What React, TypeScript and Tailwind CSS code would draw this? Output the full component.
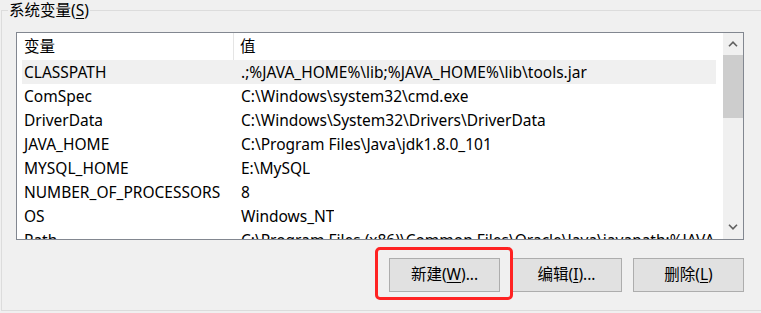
import React from 'react';

const ROWS: [string, string][] = [
  ['CLASSPATH', '.;%JAVA_HOME%\\lib;%JAVA_HOME%\\lib\\tools.jar'],
  ['ComSpec', 'C:\\Windows\\system32\\cmd.exe'],
  ['DriverData', 'C:\\Windows\\System32\\Drivers\\DriverData'],
  ['JAVA_HOME', 'C:\\Program Files\\Java\\jdk1.8.0_101'],
  ['MYSQL_HOME', 'E:\\MySQL'],
  ['NUMBER_OF_PROCESSORS', '8'],
  ['OS', 'Windows_NT'],
  ['Path', 'C:\\Program Files (x86)\\Common Files\\Oracle\\Java\\javapath;%JAVA_HOME%\\bin'],
];

const font = { fontFamily: '"Noto Sans", "Noto Sans CJK SC", sans-serif' };

function Chevron({ up }: { up?: boolean }) {
  return (
    <svg width="10" height="6" viewBox="0 0 10 6" className="block">
      <path
        d={up ? 'M1 5.2 L5 1.2 L9 5.2' : 'M1 0.8 L5 4.8 L9 0.8'}
        fill="none"
        stroke="#606060"
        strokeWidth="1.6"
      />
    </svg>
  );
}

function Btn({ label, mnemonic, rest }: { label: string; mnemonic: string; rest: string }) {
  return (
    <button className="w-[111px] h-[34px] bg-[#e1e1e1] border border-[#adadad] text-[15.5px] text-black flex items-center justify-center">
      {label}(<span className="underline underline-offset-2">{mnemonic}</span>){rest}
    </button>
  );
}

export default function App() {
  return (
    <div className="w-[761px] h-[313px] bg-[#f0f0f0] overflow-hidden" style={font}>
      <div className="pt-[10px] pl-[1px]">
        <div className="relative w-[800px] h-[301px] border border-r-0 border-[#dcdcdc] pl-[14px] pt-[21px]">
          <div className="absolute left-[6px] top-[-11px] px-[1px] bg-[#f0f0f0] text-[15.5px] leading-[20px] text-black">
            系统变量(<span className="underline underline-offset-2">S</span>)
          </div>

          {/* list view */}
          <div className="w-[728px] h-[208px] border border-[#828790] bg-white flex overflow-hidden">
            <div className="flex-1 flex flex-col overflow-hidden">
              <div className="h-[27px] shrink-0 flex items-center text-[15.5px] text-black">
                <div className="w-[217px] pl-[7px] h-full flex items-center border-r border-[#e5e5e5]">变量</div>
                <div className="pl-[6px]">值</div>
              </div>
              {ROWS.map(([k, v], i) => (
                <div
                  key={k}
                  className={`ml-[5px] mr-[7px] h-[24px] shrink-0 flex items-center pt-[1px] text-[15.5px] text-black whitespace-nowrap ${i === 0 ? 'bg-[#f0f0f0]' : ''}`}
                >
                  <div className="w-[217px] pl-[2px] shrink-0">{k}</div>
                  <div className="pl-[2px] overflow-hidden">{v}</div>
                </div>
              ))}
            </div>
            {/* scrollbar */}
            <div className="w-[20px] bg-[#f0f0f0] flex flex-col items-center">
              <div className="h-[22px] shrink-0 flex items-center justify-center">
                <Chevron up />
              </div>
              <div className="w-full h-[63px] shrink-0 bg-[#cdcdcd]" />
              <div className="flex-1" />
              <div className="h-[24px] shrink-0 flex items-center justify-center">
                <Chevron />
              </div>
            </div>
          </div>

          {/* buttons */}
          <div className="w-[728px] mt-[18px] flex justify-end gap-[11px]">
            <div className="relative">
              <Btn label="新建" mnemonic="W" rest="..." />
              <div className="absolute left-[-14px] top-[-11px] w-[138px] h-[53px] border-[3px] border-[#ff2222] rounded-[5px] pointer-events-none" />
            </div>
            <Btn label="编辑" mnemonic="I" rest="..." />
            <Btn label="删除" mnemonic="L" rest="" />
          </div>
        </div>
      </div>
    </div>
  );
}
